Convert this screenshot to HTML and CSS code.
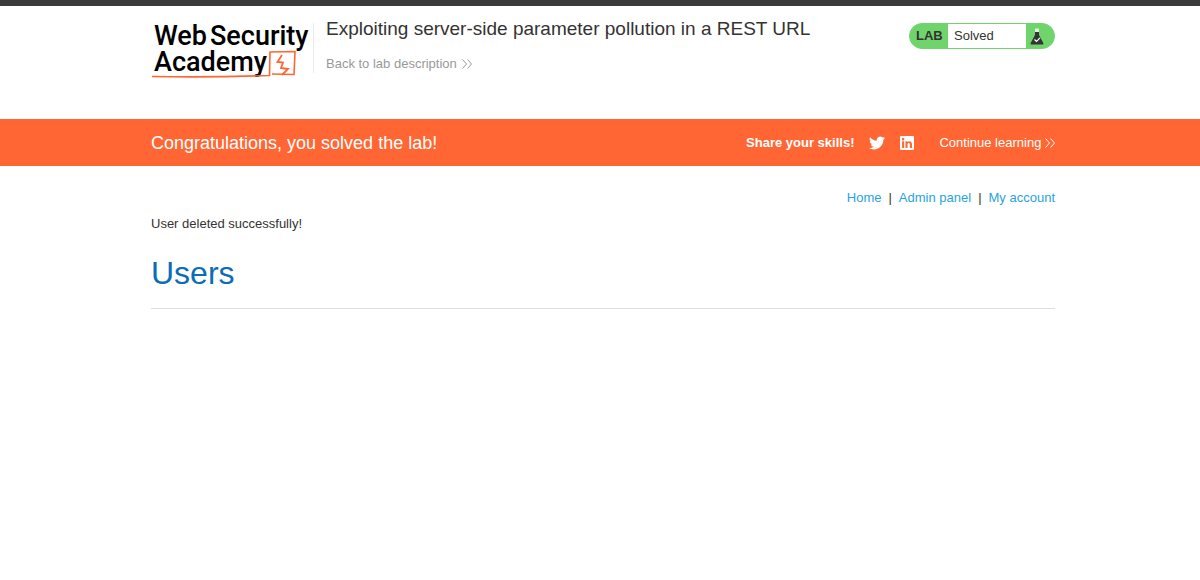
FILE: index.html
```html
<!DOCTYPE html>
<html lang="en">
<head>
<meta charset="UTF-8" />
<meta name="viewport" content="width=device-width, initial-scale=1" />
<title>Exploiting server-side parameter pollution in a REST URL</title>
<link rel="stylesheet" href="styles.css">
</head>
<body>

<header class="lab-header">
  <div class="container header-row">
    <a class="logo" href="#">
      <span class="logo-line"><span>Web</span><span>Security</span></span>
      <span class="logo-line">Academy</span>
      <svg class="logo-mark" viewBox="0 0 146 30" fill="none" stroke="#ff6633" aria-hidden="true">
        <path d="M1 28.500 C30 29 75 29 118.500 27.500 L119 4 L144 3.500 L143 26.500 L121 26" stroke-width="1.6" />
        <path d="M131 7 L126.500 14 L132 14.500 L130 20 L137 21 L131 27" stroke-width="1.8" />
      </svg>
    </a>
    <div class="title-box">
      <h2>Exploiting server-side parameter pollution in a REST URL</h2>
      <a class="back-link" href="#">Back to lab description
        <svg class="arrows" viewBox="0 0 10 10" fill="none" stroke="currentColor" aria-hidden="true"><path d="M0.500 0.500 L4.500 5 L0.500 9.500 M5.500 0.500 L9.500 5 L5.500 9.500" /></svg>
      </a>
    </div>
    <div class="lab-status">
      <span class="lab-label">LAB</span>
      <span class="lab-state">Solved</span>
      <span class="lab-icon">
        <svg viewBox="0 0 14 17" aria-hidden="true">
          <path d="M5 0.500 H9 V4 H5 Z" fill="#d9f3d6" />
          <path d="M5 4 H9 V7 L13.300 15 Q14 16.500 12.500 16.500 H1.500 Q0 16.500 0.700 15 L5 7 Z" fill="#333332" />
          <path d="M4.500 11.500 L6.500 13.500 L10 9.800" fill="none" stroke="#fff" stroke-width="1.200" />
        </svg>
      </span>
    </div>
  </div>
</header>

<section class="banner">
  <div class="container banner-row">
    <h4>Congratulations, you solved the lab!</h4>
    <div class="share">
      <strong>Share your skills!</strong>
      <a href="#" aria-label="Share on Twitter">
        <svg width="16" height="16" viewBox="0 0 24 24" fill="#fff"><path d="M24 4.600a10 10 0 0 1-2.800.8 5 5 0 0 0 2.100-2.700 10 10 0 0 1-3.100 1.200 4.900 4.900 0 0 0-8.400 4.500A14 14 0 0 1 1.700 3.200a4.900 4.900 0 0 0 1.500 6.500 4.900 4.900 0 0 1-2.200-.6v.1a4.900 4.900 0 0 0 3.900 4.800 5 5 0 0 1-2.200.1 4.900 4.900 0 0 0 4.600 3.400A10 10 0 0 1 0 19.500 14 14 0 0 0 7.500 21.700c9.100 0 14.300-7.700 14-14.600A10 10 0 0 0 24 4.600z" /></svg>
      </a>
      <a href="#" aria-label="Share on LinkedIn">
        <svg width="14" height="14" viewBox="0 0 24 24" fill="#fff"><path fill-rule="evenodd" d="M1.800 0H22.200Q24 0 24 1.800V22.200Q24 24 22.200 24H1.800Q0 24 0 22.200V1.800Q0 0 1.800 0ZM3.600 9V20.500H7.100V9ZM5.300 3.300a2.100 2.100 0 1 0 0 4.200 2.100 2.100 0 0 0 0-4.200ZM9.400 9V20.500H12.900V14.800c0-3.700 4-3.500 4 0v5.700h3.600v-6.300c0-6-5.600-6.500-7.600-3.500V9Z" /></svg>
      </a>
      <a class="continue" href="#">Continue learning
        <svg class="arrows" viewBox="0 0 10 10" fill="none" stroke="currentColor" aria-hidden="true"><path d="M0.500 0.500 L4.500 5 L0.500 9.500 M5.500 0.500 L9.500 5 L5.500 9.500" /></svg>
      </a>
    </div>
  </div>
</section>

<main class="container">
  <nav class="top-links">
    <a href="#">Home</a><span>|</span><a href="#">Admin panel</a><span>|</span><a href="#">My account</a>
  </nav>
  <p class="message">User deleted successfully!</p>
  <h1>Users</h1>
  <hr />
</main>

</body>
</html>
```
FILE: styles.css
```css
* {
  box-sizing: border-box;
}
body {
  margin: 0;
  font-family: "Liberation Sans", Arial, sans-serif;
  font-size: 13px;
  line-height: 16px;
  color: #333332;
  background: #fff;
}
h1, h2, h4, p {
  margin: 0;
  font-weight: 400;
}
a {
  color: #29a3e0;
  text-decoration: none;
}
.container {
  padding: 0 145px 0 151px;
}

/* header */
.lab-header {
  border-top: 6px solid #3b3b3b;
  padding: 17px 0 46px;
}
.header-row {
  display: flex;
  align-items: flex-start;
}
.logo {
  position: relative;
  flex: none;
  width: 163px;
  height: 50px;
  padding-left: 3px;
  border-right: 1px solid #ececec;
  font-family: Roboto, sans-serif;
  font-size: 27px;
  font-weight: 500;
  line-height: 26px;
  color: #000;
}
.logo-line {
  display: flex;
  gap: 3px;
}
.logo-mark {
  position: absolute;
  left: 0;
  bottom: -5px;
  width: 146px;
  height: 30px;
}
.title-box {
  flex: 1;
  padding-left: 12px;
}
.title-box h2 {
  margin-top: -6px;
  font-size: 19px;
  line-height: 24px;
}
.back-link {
  display: inline-block;
  margin-top: 15px;
  color: #999;
}
.arrows {
  width: 10px;
  height: 10px;
  margin-left: 2px;
  vertical-align: -1px;
}
.lab-status {
  display: flex;
  width: 146px;
  height: 26px;
  border: 1px solid #70d46c;
  border-radius: 13px;
  background: #70d46c;
  overflow: hidden;
  line-height: 24px;
}
.lab-label {
  width: 38px;
  padding-left: 6px;
  font-size: 13px;
  font-weight: 700;
}
.lab-state {
  flex: 1;
  padding-left: 6px;
  background: #fff;
}
.lab-icon {
  width: 28px;
  padding: 4px 0 0 4px;
}
.lab-icon svg {
  display: block;
  width: 14px;
  height: 17px;
}

/* solved banner */
.banner {
  background: #ff6633;
  color: #fff;
}
.banner-row {
  display: flex;
  justify-content: space-between;
  align-items: center;
  height: 47px;
}
.banner h4 {
  font-size: 18px;
}
.share {
  display: flex;
  align-items: center;
}
.share a {
  margin-left: 15px;
  color: #fff;
}
.share svg {
  vertical-align: middle;
}
.share .continue {
  margin-left: 25px;
}
.continue .arrows {
  margin-left: 0;
}

/* page content */
.top-links {
  display: flex;
  justify-content: flex-end;
  gap: 7px;
  padding-top: 24px;
}
.message {
  margin-top: 10px;
}
h1 {
  margin-top: 23px;
  font-size: 32px;
  line-height: 36px;
  color: #0b6cb8;
}
hr {
  margin: 17px 0 0;
  border: 0;
  border-top: 1px solid #dedede;
}
```
